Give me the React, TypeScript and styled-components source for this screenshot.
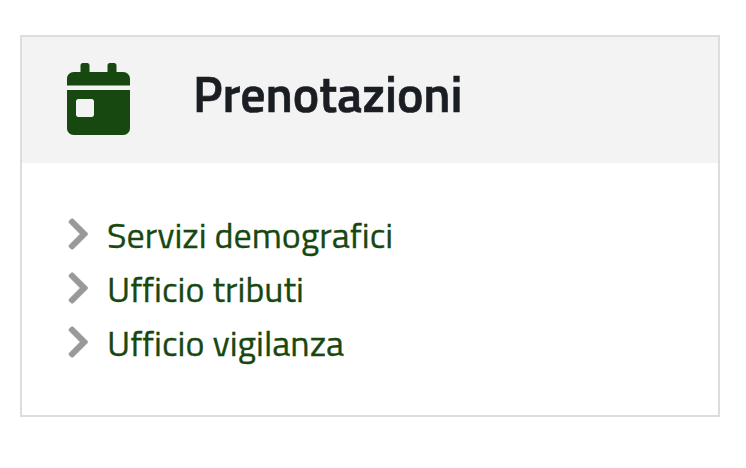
import React from 'react';
import styled, { createGlobalStyle } from 'styled-components';
import { FaCalendarDay, FaChevronRight } from 'react-icons/fa';

const GlobalStyle = createGlobalStyle`
  * { box-sizing: border-box; }
  body {
    margin: 0;
    background: #fff;
    font-family: 'Titillium Web', Roboto, 'Noto Sans', sans-serif;
    -webkit-font-smoothing: antialiased;
  }
`;

const Page = styled.main`
  padding: 35px 26px 51px 20px;
`;

const Card = styled.section`
  height: 382px;
  border: 2px solid #dddddd;
  background: #fff;
`;

const CardHeader = styled.header`
  display: flex;
  align-items: center;
  height: 126px;
  padding: 0 45px;
  background: #f3f3f4;
`;

const CalendarIcon = styled(FaCalendarDay)`
  width: 63px;
  height: 72px;
  margin-top: -2px;
  color: #17480f;
`;

const Title = styled.h2`
  margin: -14px 0 0 63px;
  font-size: 50px;
  line-height: 60px;
  font-weight: 600;
  letter-spacing: -0.08px;
  color: #1a1e23;
  -webkit-text-stroke: 0.6px currentColor;
`;

const LinkList = styled.ul`
  margin: 0;
  padding: 44px 45px;
  list-style: none;
`;

const LinkItem = styled.li`
  display: flex;
  align-items: flex-start;
  height: 54px;
`;

const Chevron = styled(FaChevronRight)`
  width: 22.5px;
  height: 36px;
  margin: 9px 17.5px 0 0;
  color: #999;
  stroke: currentColor;
  stroke-width: 10px;
`;

const ServiceLink = styled.a`
  font-size: 36px;
  line-height: 55px;
  white-space: nowrap;
  color: #17480f;
  text-decoration: none;
  -webkit-text-stroke: 0.3px currentColor;
`;

const services = ['Servizi demografici', 'Ufficio tributi', 'Ufficio vigilanza'];

export default function App() {
  return (
    <Page>
      <GlobalStyle />
      <Card>
        <CardHeader>
          <CalendarIcon />
          <Title>Prenotazioni</Title>
        </CardHeader>
        <LinkList>
          {services.map((label) => (
            <LinkItem key={label}>
              <Chevron />
              <ServiceLink>{label}</ServiceLink>
            </LinkItem>
          ))}
        </LinkList>
      </Card>
    </Page>
  );
}
